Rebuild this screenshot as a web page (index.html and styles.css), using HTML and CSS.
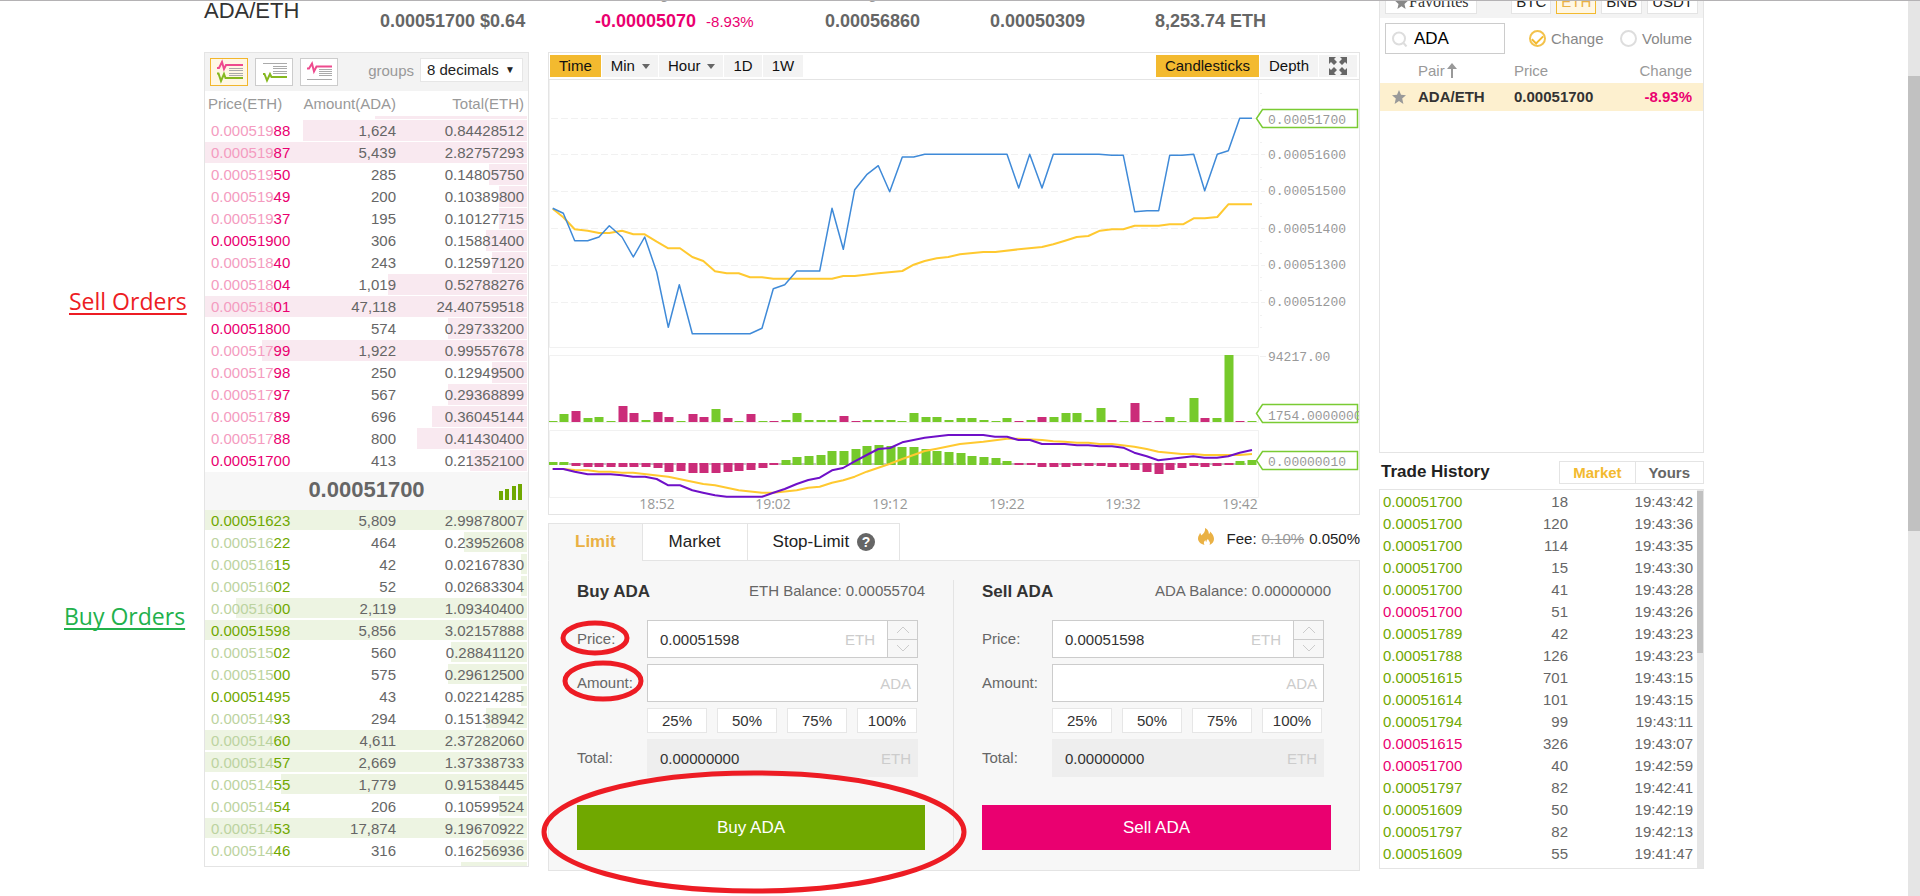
FILE: index.html
```html
<!DOCTYPE html>
<html lang="en">
<head>
<meta charset="utf-8">
<title>ADA/ETH</title>
<link rel="stylesheet" href="styles.css">
</head>
<body>
<div class="topline"></div>
<div class="viewport">
<main class="page">
  <span class="note note-sell">Sell Orders</span>
  <span class="note note-buy">Buy Orders</span>

  <div class="primary">
    <header class="ticker">
      <h1 class="pair">ADA/ETH</h1>
      <div class="metric"><span class="label">Last Price</span><strong>0.00051700 $0.64</strong></div>
      <div class="metric down"><span class="label">24h Change</span><span><strong>-0.00005070</strong><small>-8.93%</small></span></div>
      <div class="metric"><span class="label">24h High</span><strong>0.00056860</strong></div>
      <div class="metric"><span class="label">24h Low</span><strong>0.00050309</strong></div>
      <div class="metric"><span class="label">24h Volume</span><strong>8,253.74 ETH</strong></div>
    </header>

    <div class="columns">
      <section class="book panel">
        <div class="book-bar">
          <button class="view active" aria-label="All orders">
            <svg viewBox="0 0 36 26"><path class="gr" d="M18 9.500h14M18 11.500h14M18 14.500h14M18 16.500h14"/><path class="rd" d="M6 9h2l3-6 2 7 2-4h17"/><path class="gn" d="M6 14.500h1.500l2.500 7.500 3-7 1.500 4H32"/></svg>
          </button>
          <button class="view" aria-label="Buy orders">
            <svg viewBox="0 0 36 26"><path class="gr" d="M7 4.500h24M17 7.500h14M17 9.500h14M17 12.500h14M17 14.500h14"/><path class="gn" d="M7 15h1.500l2.500 6.500 3-6.500 1.500 3H31"/></svg>
          </button>
          <button class="view" aria-label="Sell orders">
            <svg viewBox="0 0 36 26"><path class="gr" d="M18 10.500h13M18 12.500h13M18 14.500h13M18 16.500h13M6 20.500h25"/><path class="rd" d="M6 9.500h2l3-5 2 8 2.500-5H31"/></svg>
          </button>
          <label for="groups">groups</label>
          <span class="select"><select id="groups"><option>8 decimals</option></select><span class="caret">▼</span></span>
        </div>
        <div class="book-head"><span>Price(ETH)</span><span>Amount(ADA)</span><span>Total(ETH)</span></div>
        <div class="book-rows sells">
          <table>
            <tr style="--w:152px"><td>&nbsp;</td><td></td><td></td></tr>
            <tr style="--w:224px"><td><i>0.000519</i>88</td><td>1,624</td><td>0.84428512</td></tr>
            <tr style="--w:322px"><td><i>0.000519</i>87</td><td>5,439</td><td>2.82757293</td></tr>
            <tr style="--w:38px"><td><i>0.000519</i>50</td><td>285</td><td>0.14805750</td></tr>
            <tr style="--w:28px"><td><i>0.000519</i>49</td><td>200</td><td>0.10389800</td></tr>
            <tr style="--w:28px"><td><i>0.000519</i>37</td><td>195</td><td>0.10127715</td></tr>
            <tr style="--w:41px"><td>0.00051900</td><td>306</td><td>0.15881400</td></tr>
            <tr style="--w:35px"><td><i>0.000518</i>40</td><td>243</td><td>0.12597120</td></tr>
            <tr style="--w:139px"><td><i>0.000518</i>04</td><td>1,019</td><td>0.52788276</td></tr>
            <tr style="--w:322px"><td><i>0.000518</i>01</td><td>47,118</td><td>24.40759518</td></tr>
            <tr style="--w:79px"><td>0.00051800</td><td>574</td><td>0.29733200</td></tr>
            <tr style="--w:265px"><td><i>0.000517</i>99</td><td>1,922</td><td>0.99557678</td></tr>
            <tr style="--w:35px"><td><i>0.000517</i>98</td><td>250</td><td>0.12949500</td></tr>
            <tr style="--w:79px"><td><i>0.000517</i>97</td><td>567</td><td>0.29368899</td></tr>
            <tr style="--w:95px"><td><i>0.000517</i>89</td><td>696</td><td>0.36045144</td></tr>
            <tr style="--w:110px"><td><i>0.000517</i>88</td><td>800</td><td>0.41430400</td></tr>
            <tr style="--w:57px"><td>0.00051700</td><td>413</td><td>0.21352100</td></tr>
          </table>
        </div>
        <div class="last"><strong>0.00051700</strong>
          <svg class="signal" viewBox="0 0 23 16"><path d="M0 7h4v9H0zM6 5h4v11H6zM13 2h4v14h-4zM19 0h4v16h-4z"/></svg>
        </div>
        <div class="book-rows buys">
          <table>
            <tr style="--w:322px"><td>0.00051623</td><td>5,809</td><td>2.99878007</td></tr>
            <tr style="--w:63px"><td><i>0.000516</i>22</td><td>464</td><td>0.23952608</td></tr>
            <tr style="--w:6px"><td><i>0.000516</i>15</td><td>42</td><td>0.02167830</td></tr>
            <tr style="--w:6px"><td><i>0.000516</i>02</td><td>52</td><td>0.02683304</td></tr>
            <tr style="--w:291px"><td><i>0.000516</i>00</td><td>2,119</td><td>1.09340400</td></tr>
            <tr style="--w:322px"><td>0.00051598</td><td>5,856</td><td>3.02157888</td></tr>
            <tr style="--w:76px"><td><i>0.000515</i>02</td><td>560</td><td>0.28841120</td></tr>
            <tr style="--w:79px"><td><i>0.000515</i>00</td><td>575</td><td>0.29612500</td></tr>
            <tr style="--w:6px"><td>0.00051495</td><td>43</td><td>0.02214285</td></tr>
            <tr style="--w:41px"><td><i>0.000514</i>93</td><td>294</td><td>0.15138942</td></tr>
            <tr style="--w:322px"><td><i>0.000514</i>60</td><td>4,611</td><td>2.37282060</td></tr>
            <tr style="--w:322px"><td><i>0.000514</i>57</td><td>2,669</td><td>1.37338733</td></tr>
            <tr style="--w:246px"><td><i>0.000514</i>55</td><td>1,779</td><td>0.91538445</td></tr>
            <tr style="--w:28px"><td><i>0.000514</i>54</td><td>206</td><td>0.10599524</td></tr>
            <tr style="--w:322px"><td><i>0.000514</i>53</td><td>17,874</td><td>9.19670922</td></tr>
            <tr style="--w:44px"><td><i>0.000514</i>46</td><td>316</td><td>0.16256936</td></tr>
            <tr style="--w:66px"><td>&nbsp;</td><td></td><td></td></tr>
          </table>
        </div>
      </section>

      <div class="center">
        <section class="chart panel">
          <div class="chart-bar">
            <button class="active">Time</button>
            <button>Min<span class="drop"></span></button>
            <button>Hour<span class="drop"></span></button>
            <button>1D</button>
            <button>1W</button>
            <button class="active push">Candlesticks</button>
            <button>Depth</button>
            <button aria-label="Full screen"><svg class="expand" viewBox="0 0 18 18"><path d="M0 0h7L5 2l3 3-3 3-3-3-2 2zM18 0v7l-2-2-3 3-3-3 3-3-2-2zM0 18v-7l2 2 3-3 3 3-3 3 2 2zM18 18h-7l2-2-3-3 3-3 3 3 2-2z"/></svg></button>
          </div>
          <svg class="plot" viewBox="549 80 810 434">
            <path class="frame" d="M549.500 80V347.500H1258.500V80M549.500 422.500V355.500H1258.500V422.500zM549.500 497.500V430.500H1258.500V497.500zM1260 356.500h6"/>
            <path class="grid" d="M551 118.500H1265M551 154.500H1265M551 191.500H1265M551 228.500H1265M551 265.500H1265M551 302.500H1265"/>
            <path class="frame" d="M1260 93.500h2M1260 105.500h2M1260 129.500h2M1260 142.500h2M1260 167.500h2M1260 179.500h2M1260 203.500h2M1260 216.500h2M1260 241.500h2M1260 253.500h2M1260 277.500h2M1260 290.500h2M1260 315.500h2M1260 327.500h2"/>
            <path class="bar up" d="M553 422v-1M564 422v-8M588 422v-4M599 422v-5M611 422v-1M646 422v-2M681 422v-1M716 422v-13M739 422v-1M763 422v-1M786 422v-2M797 422v-9M809 422v-2M821 422v-2M832 422v-2M867 422v-2M879 422v-2M891 422v-2M902 422v-1M914 422v-9M926 422v-5M937 422v-5M949 422v-2M961 422v-4M972 422v-4M984 422v-2M996 422v-1M1007 422v-4M1031 422v-2M1054 422v-5M1066 422v-9M1077 422v-9M1089 422v-2M1101 422v-14M1124 422v-1M1170 422v-5M1182 422v-1M1194 422v-24M1217 422v-4M1229 422v-67M1252 422v-1"/>
            <path class="bar dn" d="M576 422v-11M623 422v-16M634 422v-9M658 422v-10M669 422v-5M693 422v-8M704 422v-5M728 422v-4M751 422v-8M774 422v-1M844 422v-6M856 422v-1M1019 422v-1M1042 422v-5M1112 422v-2M1135 422v-19M1147 422v-1M1159 422v-1M1205 422v-4M1240 422v-1"/>
            <path class="zero" d="M549 464H1256"/>
            <path class="bar up" d="M553 465v-3M564 465v-3M786 465v-5M797 465v-8M809 465v-9M821 465v-10M832 465v-14M844 465v-14M856 465v-16M867 465v-19M879 465v-20M891 465v-19M902 465v-18M914 465v-18M926 465v-16M937 465v-14M949 465v-13M961 465v-12M972 465v-9M984 465v-8M996 465v-7M1007 465v-4M1240 465v-4M1252 465v-5"/>
            <path class="bar dn" d="M576 463v3M588 463v4M599 463v4M611 463v4M623 463v4M634 463v4M646 463v4M658 463v5M669 463v9M681 463v8M693 463v10M704 463v10M716 463v10M728 463v9M739 463v8M751 463v7M763 463v5M774 463v2M1019 463v2M1031 463v2M1042 463v4M1054 463v4M1066 463v4M1077 463v3M1089 463v3M1101 463v3M1112 463v4M1124 463v4M1135 463v7M1147 463v9M1159 463v11M1170 463v7M1182 463v5M1194 463v3M1205 463v4M1217 463v3M1229 463v2"/>
            <polyline class="line avg" points="552.7,208.7 563.3,217.3 574.7,229.3 587.7,230.7 599,233 609.3,233 622,230.7 633.3,234.3 644.7,234.3 656.7,241.7 668.3,248.3 680,248.3 692.3,257 703.3,261 715,271.3 726.7,273.3 738.7,273.3 750,277.3 762,277.3 773.3,278.7 832,278.7 843.3,276 854.7,276 878.3,273.3 902.3,271 913.7,264.7 924.7,261 936.7,258.3 948.3,257 960,254.3 983.3,252 995.3,252 1018.7,249.3 1042,247 1053.3,244.3 1065,240.7 1076.7,237 1088.3,236 1100,230.7 1112,229.3 1123.3,229.3 1134.7,225.7 1158.7,225.7 1169.7,224.3 1183,224.3 1193.7,218.3 1204.7,218.3 1217.3,217 1228.3,204.3 1252,204.3"/>
            <polyline class="line price" points="552.7,208.3 563.3,213.3 574.7,240.7 587.7,240.7 599,237 609.3,225.7 622,237 633.3,257 644.7,237 656.7,272 668.3,327.3 679.3,284.7 692.3,333.7 750,333.7 762,328.3 773.3,288.7 784.7,284.7 796.7,271 819.7,271 832,208.3 843.3,249.3 854.7,189.7 866.7,174.7 878.3,165.7 889.7,191.7 902.3,157 913.7,157 924.7,154.3 1007,154.3 1018.7,188 1029.7,154.3 1042,188 1053.3,154.3 1099,154.3 1112,155.3 1123.3,155.3 1134.7,211.7 1147,210.7 1158.7,210.7 1169.7,155.3 1182,155.3 1193.7,154.3 1204.7,190.7 1217.3,154.3 1228.3,150.7 1239.7,118.3 1252,118.3"/>
            <polyline class="line avg" points="552.7,469 563,469 574.7,470 587.7,470.3 599,471.7 610.7,471.7 622,472.7 633,472.7 668.3,476.7 703.3,484 715,485.3 738.7,490.3 762,492.7 773.3,492.7 796.7,490.3 808.3,487.7 819.7,486.7 832,482.7 843.3,480.3 854.7,476.7 866.7,471.7 890,463.7 902.3,459 924.7,451 936.7,448.7 960,444 983.3,441.7 1007,438.7 1018.3,438.7 1042,440 1053.3,441.3 1064.7,441.7 1077,442.7 1088.3,442.7 1099.3,444 1112,444 1134.3,446.7 1146.7,449 1158.3,451.7 1181.7,454 1193.3,454 1204.3,455 1239.7,455 1252,454"/>
            <polyline class="line macd" points="552.7,469 563.3,469 574.7,471.7 587.7,474.3 610.7,474.3 622,475.3 633,476.7 645,476.7 656.7,479 668.3,485.3 680,485.3 692.3,490.3 703,492.7 715,495.3 726.7,496.7 762,496.7 773.3,492.7 784.7,489 796.7,484 808.3,480 819.7,477.7 832,470.3 843,468 854.7,461.3 866.7,455 878.3,449 890,448 902.3,442.3 924.7,437.7 948.3,435 983.3,435 995,436.7 1007,436.7 1018.3,440 1030,440 1042,444 1064.7,444 1077,445.3 1088.3,445.3 1099.3,446.3 1112,446.3 1123.3,447.7 1134.3,452.7 1146.7,456.3 1158.3,460.3 1169.3,459 1193.3,456.3 1204.3,457.7 1217,457.7 1228.3,456.3 1239.7,452.7 1252,450"/>
            <path class="tag" d="M1256.500 118.500l6-9h95v18h-95zM1256.500 413.500l6-9h95v18h-95zM1256.500 460.500l6-9h95v18h-95z"/>
            <g class="axis">
              <text x="1268" y="124">0.00051700</text><text x="1268" y="159">0.00051600</text><text x="1268" y="195">0.00051500</text><text x="1268" y="233">0.00051400</text><text x="1268" y="269">0.00051300</text><text x="1268" y="306">0.00051200</text>
              <text x="1268" y="361">94217.00</text><text x="1268" y="420">1754.0000000</text><text x="1268" y="466">0.00000010</text>
            </g>
            <g class="times">
              <text x="657" y="509">18:52</text><text x="773" y="509">19:02</text><text x="890" y="509">19:12</text><text x="1007" y="509">19:22</text><text x="1123" y="509">19:32</text><text x="1240" y="509">19:42</text>
            </g>
          </svg>
        </section>

        <section class="trade">
          <div class="tabs">
            <button class="tab active">Limit</button><button class="tab">Market</button><button class="tab">Stop-Limit
              <svg class="help" viewBox="0 0 18 18"><circle cx="9" cy="9" r="9"/><text x="9" y="14">?</text></svg></button>
            <p class="fee"><svg class="flame" viewBox="0 0 16 17"><path d="M7 0c4 2 3.500 4.500 4 6 1-.5 1-1.500 1-2.500 2.500 2 4 5 4 7.500 0 3-2 5-4.500 6 1.500-3-1-4-1.500-6-1.500 1-1.500 2-1.500 3-1-.5-1-1-1-2-2 1.500-2 3.500-1 5C3 16 0 14 0 10.500 0 8 1.500 6.500 2 5c.8.5 1 1.500 1 2.500C6 5.500 7.500 3 7 0z"/></svg>Fee: <s>0.10%</s> 0.050%</p>
          </div>
          <div class="forms">
            <form class="order">
              <div class="order-head"><h2>Buy ADA</h2><span>ETH Balance: 0.00055704</span></div>
              <label for="bp">Price:</label>
              <div class="field"><input id="bp" value="0.00051598"><span class="unit">ETH</span>
                <span class="steps"><button type="button" aria-label="Increase"><svg viewBox="0 0 14 8"><path d="M1 7l6-6 6 6"/></svg></button><button type="button" aria-label="Decrease"><svg viewBox="0 0 14 8"><path d="M1 1l6 6 6-6"/></svg></button></span></div>
              <label for="ba">Amount:</label>
              <div class="field"><input id="ba"><span class="unit">ADA</span></div>
              <div class="shares"><button type="button">25%</button><button type="button">50%</button><button type="button">75%</button><button type="button">100%</button></div>
              <label for="bt">Total:</label>
              <div class="field total"><input id="bt" value="0.00000000"><span class="unit">ETH</span></div>
              <button type="button" class="submit buy">Buy ADA</button>
            </form>
            <form class="order">
              <div class="order-head"><h2>Sell ADA</h2><span>ADA Balance: 0.00000000</span></div>
              <label for="sp">Price:</label>
              <div class="field"><input id="sp" value="0.00051598"><span class="unit">ETH</span>
                <span class="steps"><button type="button" aria-label="Increase"><svg viewBox="0 0 14 8"><path d="M1 7l6-6 6 6"/></svg></button><button type="button" aria-label="Decrease"><svg viewBox="0 0 14 8"><path d="M1 1l6 6 6-6"/></svg></button></span></div>
              <label for="sa">Amount:</label>
              <div class="field"><input id="sa"><span class="unit">ADA</span></div>
              <div class="shares"><button type="button">25%</button><button type="button">50%</button><button type="button">75%</button><button type="button">100%</button></div>
              <label for="st">Total:</label>
              <div class="field total"><input id="st" value="0.00000000"><span class="unit">ETH</span></div>
              <button type="button" class="submit sell">Sell ADA</button>
            </form>
          </div>
          <svg class="marks" viewBox="0 0 430 373"><ellipse cx="52" cy="115" rx="32" ry="15"/><ellipse cx="60" cy="158" rx="38" ry="18"/><ellipse cx="211" cy="309" rx="210" ry="59"/></svg>
        </section>
      </div>
    </div>
  </div>

  <aside class="side">
    <section class="markets panel">
      <div class="market-tabs">
        <button class="fav"><svg viewBox="0 0 14 14"><path d="M7 0l2 4.700 5 .5-3.800 3.300L11.400 14 7 11.100 2.600 14l1.200-5.500L0 5.200l5-.5z"/></svg>Favorites</button>
        <button class="push">BTC</button><button class="active">ETH</button><button>BNB</button><button>USDT</button>
      </div>
      <div class="filters">
        <span class="search"><svg viewBox="0 0 16 16"><circle cx="7" cy="7.500" r="6"/><path d="M11.500 12l3 3.500"/></svg><input aria-label="Search" value="ADA"></span>
        <label><input type="radio" name="sort" checked>Change</label>
        <label><input type="radio" name="sort">Volume</label>
      </div>
      <table class="pairs">
        <thead><tr><th></th><th>Pair<svg viewBox="0 0 10 15"><path d="M5 0l5 6H6v9H4V6H0z"/></svg></th><th>Price</th><th>Change</th></tr></thead>
        <tbody><tr><td><svg viewBox="0 0 14 14"><path d="M7 0l2 4.700 5 .5-3.800 3.300L11.400 14 7 11.100 2.600 14l1.200-5.500L0 5.200l5-.5z"/></svg></td><td>ADA/ETH</td><td>0.00051700</td><td>-8.93%</td></tr></tbody>
      </table>
    </section>
    <div class="history-head"><h2>Trade History</h2><div><button class="active">Market</button><button>Yours</button></div></div>
    <section class="history panel">
      <table>
        <tr><td>0.00051700</td><td>18</td><td>19:43:42</td></tr>
        <tr><td>0.00051700</td><td>120</td><td>19:43:36</td></tr>
        <tr><td>0.00051700</td><td>114</td><td>19:43:35</td></tr>
        <tr><td>0.00051700</td><td>15</td><td>19:43:30</td></tr>
        <tr><td>0.00051700</td><td>41</td><td>19:43:28</td></tr>
        <tr class="sold"><td>0.00051700</td><td>51</td><td>19:43:26</td></tr>
        <tr><td>0.00051789</td><td>42</td><td>19:43:23</td></tr>
        <tr><td>0.00051788</td><td>126</td><td>19:43:23</td></tr>
        <tr><td>0.00051615</td><td>701</td><td>19:43:15</td></tr>
        <tr><td>0.00051614</td><td>101</td><td>19:43:15</td></tr>
        <tr><td>0.00051794</td><td>99</td><td>19:43:11</td></tr>
        <tr class="sold"><td>0.00051615</td><td>326</td><td>19:43:07</td></tr>
        <tr class="sold"><td>0.00051700</td><td>40</td><td>19:42:59</td></tr>
        <tr><td>0.00051797</td><td>82</td><td>19:42:41</td></tr>
        <tr><td>0.00051609</td><td>50</td><td>19:42:19</td></tr>
        <tr><td>0.00051797</td><td>82</td><td>19:42:13</td></tr>
        <tr><td>0.00051609</td><td>55</td><td>19:41:47</td></tr>
      </table>
      <div class="track"><div class="thumb"></div></div>
    </section>
  </aside>
</main>
<div class="page-track"><div class="page-thumb"></div></div>
</div>
</body>
</html>
```
FILE: styles.css
```css
* { box-sizing: border-box; }
body { margin: 0; background: #fff; color: #666; font: 15px/22px "Liberation Sans", Arial, sans-serif; }
button, input, select { font: inherit; color: inherit; margin: 0; padding: 0; border: 0; border-radius: 0; background: none; outline: 0; }
h1, h2, p { margin: 0; }
i { font-style: normal; }
table { border-collapse: collapse; table-layout: fixed; width: 100%; }
td, th { padding: 0; font-weight: normal; }
svg { display: block; }

.topline { position: absolute; top: 0; left: 0; right: 0; height: 1px; background: #b4b2b4; z-index: 5; }
.viewport { display: flex; height: 100vh; overflow: hidden; }
.page { position: relative; flex: 1; max-width: 1500px; margin: -20px auto 0; display: grid; grid-template-columns: minmax(0, 1fr) 325px; column-gap: 19px; align-items: start; }
.page-track { width: 12px; padding-top: 76px; background: #e5e5e5; }
.page-thumb { height: 455px; background: #c1c1c1; }
.panel { border: 1px solid #e4e4e4; background: #fff; }

.note { position: absolute; font: 23px/30px "Open Sans", "Noto Sans", sans-serif; text-decoration: underline; text-decoration-thickness: 2px; text-underline-offset: 3px; text-decoration-skip-ink: none; white-space: nowrap; }
.note-sell { left: -135px; top: 306px; color: #ed1c24; }
.note-buy { left: -140px; top: 621px; color: #22b14c; }

.ticker { display: grid; grid-template-columns: 176px 215px 230px 165px 165px 1fr; height: 72px; }
.pair { padding-top: 18px; font-size: 22px; line-height: 26px; font-weight: normal; color: #333; }
.metric { display: flex; flex-direction: column; gap: 7px; padding-top: 5px; font-size: 18px; line-height: 22px; white-space: nowrap; }
.metric .label { font-size: 15px; line-height: 18px; color: #999; }
.metric small { margin-left: 10px; font-size: 15px; }
.down { color: #ea0070; }
.columns { display: grid; grid-template-columns: 325px minmax(0, 1fr); column-gap: 19px; align-items: start; }

.book-bar { display: flex; height: 38px; padding: 5px 5px 0; background: #f3f3f3; }
.view { width: 38px; height: 28px; margin-right: 7px; border: 1px solid #ccc; background: #fff; }
.view.active { border-color: #f2b62c; background: #fff7e4; }
.view svg { width: 36px; height: 26px; fill: none; }
.gr { stroke: #aaa; }
.rd { stroke: #ee4b8e; stroke-width: 2; }
.gn { stroke: #86b81f; stroke-width: 2; }
.book-bar label { margin-left: auto; padding-right: 6px; line-height: 26px; color: #999; }
.select { position: relative; width: 103px; height: 24px; }
.select select { appearance: none; width: 100%; height: 24px; padding-left: 6px; border: 1px solid #e6e6e6; background: #fff; color: #222; }
.caret { position: absolute; right: 8px; top: 0; line-height: 24px; font-size: 10px; color: #222; pointer-events: none; }
.book-head { display: grid; grid-template-columns: 1fr 108px 128px; padding: 0 4px 0 3px; line-height: 25px; color: #999; text-align: right; }
.book-head span:first-child { text-align: left; }
.book-rows { display: flex; height: 356px; padding-right: 1px; overflow: hidden; }
.sells { align-items: flex-end; }
.buys { align-items: flex-start; }
.book-rows tr { height: 22px; background: linear-gradient(var(--bar), var(--bar)) no-repeat right top / var(--w) var(--h); }
.sells tr { --bar: #f9e9f0; --h: 21px; }
.buys tr { --bar: #edf4e2; --h: 20px; }
.book-rows td { text-align: right; }
.book-rows td:first-child { width: 110px; padding-left: 6px; text-align: left; }
.book-rows td:nth-child(2) { width: 81px; }
.book-rows td:last-child { padding-right: 3px; }
.sells td:first-child { color: #ea0070; }
.sells i { color: #f49cc0; }
.buys td:first-child { color: #70a800; }
.buys i { color: #bcd3a0; }
.last { position: relative; height: 38px; background: #f7f7f7; text-align: center; font-size: 22px; line-height: 36px; }
.signal { position: absolute; right: 6px; top: 12px; width: 23px; fill: #70a800; }

.chart-bar { display: flex; gap: 1px; padding: 2px 2px 2px 1px; border-bottom: 1px solid #e4e4e4; }
.chart-bar button { display: flex; align-items: center; height: 22px; padding: 0 9px; background: #f3f3f3; color: #111; }
.chart-bar .active { background: #f3ba2f; }
.push { margin-left: auto; }
.drop { margin: 0 -1px 0 7px; border: 4px solid transparent; border-top: 5px solid #666; border-bottom: 0; }
.expand { width: 18px; margin: 0 1px; fill: #666; }
.plot { width: 100%; }
.frame { fill: none; stroke: #f1f1f1; }
.grid { stroke: #f1f1f1; stroke-dasharray: 7 3; }
.bar { stroke-width: 9; }
.up { stroke: #76ca2b; }
.dn { stroke: #cb2c79; }
.zero { stroke: #888; stroke-dasharray: 7 3; }
.line { fill: none; stroke-linejoin: round; }
.avg { stroke: #ffc930; stroke-width: 2; }
.price { stroke: #3f8ad8; stroke-width: 1.500; }
.macd { stroke: #6f10c8; stroke-width: 2; }
.tag { fill: #fff; stroke: #7acb33; stroke-width: 1.500; }
.axis { font: 13px "Liberation Mono", monospace; fill: #999; }
.times { font: 14px "Open Sans", "Noto Sans", sans-serif; fill: #999; text-anchor: middle; }

.trade { position: relative; margin-top: 8px; }
.tabs { position: relative; z-index: 1; display: flex; height: 38px; margin-bottom: -1px; font-size: 17px; }
.tab { display: flex; align-items: center; justify-content: center; gap: 8px; border: 1px solid #e4e4e4; margin-right: -1px; background: #fff; color: #222; padding: 0 26px; }
.tab.active { font-weight: bold; color: #eab144; background: #f7f7f7; border-bottom-color: #f7f7f7; }
.tab:nth-child(3) { padding: 0 24px 0 25px; }
.help { width: 18px; height: 18px; fill: #666; overflow: visible; }
.help text { fill: #fff; font-size: 14px; font-weight: bold; text-anchor: middle; }
.fee { display: flex; gap: 5px; margin-left: auto; padding-top: 5px; font-size: 15px; color: #222; }
.fee s { color: #999; }
.flame { width: 16px; height: 17px; margin-right: 8px; fill: #eab144; }
.forms { display: grid; grid-template-columns: 1fr 1fr; padding: 19px 0 20px; border: 1px solid #e4e4e4; background: #f7f7f7; }
.order { display: grid; grid-template-columns: 70px minmax(0, 1fr); row-gap: 6px; padding: 0 28px; align-items: center; }
.order:first-child { border-right: 1px solid #e4e4e4; }
.order-head { grid-column: 1 / -1; display: flex; justify-content: space-between; padding: 0 0 10px; line-height: 22px; }
.order h2 { font-size: 17px; line-height: 24px; color: #333; }
.field { position: relative; display: flex; height: 38px; margin-right: 7px; border: 1px solid #ccc; background: #fff; color: #ccc; line-height: 37px; }
.field input { flex: 1; width: 100%; min-width: 0; padding-left: 12px; color: #333; }
.unit { padding-right: 6px; }
.steps { display: flex; flex-direction: column; width: 30px; margin-left: 6px; border-left: 1px solid #ccc; background: #f7f7f7; }
.steps button { flex: 1; display: flex; align-items: center; justify-content: center; }
.steps button + button { border-top: 1px solid #ccc; }
.steps svg { width: 14px; fill: none; stroke: #ccc; }
.total { background: #eee; border-color: #eee; }
.shares { grid-column: 2; display: flex; gap: 10px; }
.shares button { flex: 0 0 60px; height: 25px; border: 1px solid #e6e6e6; background: #fff; color: #333; }
.submit { grid-column: 1 / -1; height: 45px; margin-top: 22px; font-size: 17px; color: #fff; }
.buy { background: #70a800; }
.sell { background: #ea0070; }
.marks { position: absolute; left: -5px; top: 0; width: 430px; height: 373px; overflow: visible; z-index: 2; fill: none; stroke: #ed1c24; stroke-width: 5; pointer-events: none; }

.markets { height: 473px; }
.market-tabs { display: flex; align-items: flex-end; gap: 5px; height: 37px; padding: 0 5px 4px; background: #f3f3f3; }
.market-tabs button { height: 24px; padding: 0 4px; border: 1px solid #e4e4e4; background: #fff; color: #222; }
.market-tabs .active { border-color: #f3ba2f; background: #fff7e4; color: #eab144; }
.market-tabs .fav { display: flex; align-items: center; gap: 1px; padding: 0 7px 0 9px; font: 16px "Liberation Serif", serif; color: #333; }
.fav svg { width: 13px; fill: #888; }
.filters { display: flex; align-items: center; padding: 5px 11px 5px 5px; color: #888; }
.search { position: relative; width: 120px; margin-right: 24px; }
.search input { width: 100%; height: 31px; padding-left: 28px; border: 1px solid #ccc; font-size: 17px; color: #000; }
.search svg { position: absolute; left: 7px; top: 8px; width: 16px; fill: none; stroke: #ddd; stroke-width: 2; }
.filters label { display: flex; align-items: center; gap: 5px; }
.filters label:last-child { margin-left: auto; }
.filters label input { display: grid; place-items: center; appearance: none; width: 17px; height: 17px; border: 2px solid #ddd; border-radius: 50%; }
.filters label input:checked { border-color: #f3c24c; }
.filters label input:checked::after { content: ""; width: 9px; height: 5px; border: solid #f3ba2f; border-width: 0 0 2px 2px; transform: rotate(-45deg); }
.pairs { text-align: left; }
.pairs th { height: 24px; color: #999; }
.pairs th:first-child { width: 38px; }
.pairs th:nth-child(2) { width: 96px; }
.pairs th svg { display: inline-block; width: 10px; margin-left: 2px; vertical-align: -2px; fill: #999; }
.pairs td { height: 28px; background: #fdf0cf; color: #333; font-weight: bold; }
.pairs td svg { width: 14px; margin-left: 12px; fill: #999; }
.pairs th:last-child, .pairs td:last-child { padding-right: 11px; text-align: right; }
.pairs td:last-child { color: #ea0070; }
.history-head { display: flex; justify-content: space-between; align-items: center; height: 36px; padding: 2px 0 0 2px; }
.history-head h2 { font-size: 17px; color: #222; }
.history-head div { display: flex; border: 1px solid #e4e4e4; }
.history-head button { height: 21px; padding: 0 13px; font-weight: bold; line-height: 21px; }
.history-head button + button { border-left: 1px solid #e4e4e4; }
.history-head .active { color: #f3ba2f; }
.history { display: flex; align-items: stretch; }
.history table { flex: 1; margin: 1px 0 3px; }
.history tr { height: 22px; }
.history td { text-align: right; }
.history td:first-child { padding-left: 3px; text-align: left; color: #70a800; }
.history td:nth-child(2) { width: 82px; }
.history td:last-child { padding-right: 4px; width: 129px; }
.history .sold td:first-child { color: #ea0070; }
.track { width: 6px; padding-top: 1px; background: #e6e6e6; }
.thumb { height: 162px; background: #c1c1c1; }
```
